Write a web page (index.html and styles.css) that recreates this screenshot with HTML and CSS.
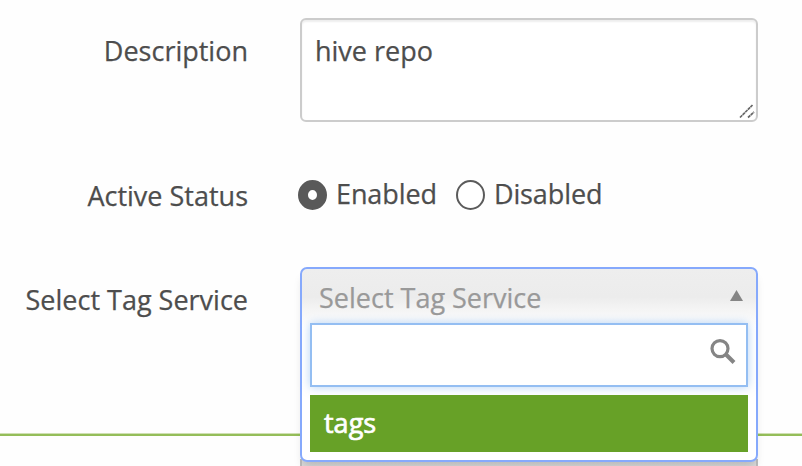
FILE: index.html
```html
<!DOCTYPE html>
<html lang="en">
<head>
<meta charset="utf-8">
<title>Service settings</title>
<link rel="stylesheet" href="styles.css">
</head>
<body>
<form class="form">
  <div class="row row-description">
    <div class="label">Description</div>
    <div class="textarea">
      hive repo
      <svg class="grip" width="16" height="16" viewBox="0 0 16 16"><path d="M1 14.5 13.5 2M9 14.5 15 9" stroke="#666" stroke-width="1.7" stroke-dasharray="3.2 .5" fill="none"/></svg>
    </div>
  </div>
  <div class="row row-status">
    <div class="label">Active Status</div>
    <div class="radios">
      <div class="radio"><i class="dot checked"></i><span>Enabled</span></div>
      <div class="radio"><i class="dot"></i><span>Disabled</span></div>
    </div>
  </div>
  <div class="row row-tag">
    <div class="label">Select Tag Service</div>
    <div class="select">
      <div class="choice"><span>Select Tag Service</span>
        <svg width="13" height="11" viewBox="0 0 13 11"><path d="M6.5 0 13 11H0Z" fill="#858585"/></svg>
      </div>
      <div class="search">
        <svg width="28" height="28" viewBox="0 0 28 28" fill="none" stroke="#858585"><circle cx="11" cy="10.6" r="8" stroke-width="3.2"/><path d="M16.5 16 25 24.5" stroke-width="4"/></svg>
      </div>
      <div class="option">tags</div>
    </div>
  </div>
</form>
<div class="divider"></div>
<div class="next-field"></div>
</body>
</html>
```

FILE: styles.css
```css
* { box-sizing: border-box; }
body {
  margin: 0;
  height: 466px;
  overflow: hidden;
  background: #fefefe;
  color: #4d4d4d;
  font: 27px/38px "Open Sans", "Noto Sans", sans-serif;
  -webkit-text-stroke: .25px;
}
.form { height: 433px; padding-top: 18px; }
.row {
  display: grid;
  grid-template-columns: 248px 458px;
  column-gap: 52px;
  align-items: start;
}
.row-description { height: 149px; }
.row-status { height: 100px; }
.label { text-align: right; white-space: nowrap; padding-top: 14px; }
.row-status .label { padding-top: 10px; }
.textarea {
  position: relative;
  height: 104px;
  border: 2px solid #ccc;
  border-radius: 6px;
  padding: 12px 13px;
  background: #fff;
  box-shadow: inset 0 2px 2px #eee;
}
.grip { position: absolute; right: 1px; bottom: 1px; }
.radios { display: flex; gap: 19px; padding-top: 8px; margin-left: -2px; }
.radio { display: flex; gap: 9px; letter-spacing: -.1px; }
.dot {
  width: 29px;
  height: 30px;
  margin-top: 5px;
  border: 2px solid #5b5b5b;
  border-radius: 50%;
  background: #fff;
}
.dot.checked { border-width: 10.5px 10px; border-color: #595959; }
.select {
  position: relative;
  z-index: 1;
  height: 195px;
  border: 2px solid #86a9fc;
  border-radius: 7px;
  padding: 0 8px 8px;
  background: linear-gradient(#eee 0, #ececec 28px, #f7f7f7 44px, #fff 58px);
  box-shadow: 0 8px 10px -3px rgba(0, 0, 0, .15);
}
.choice {
  display: flex;
  justify-content: space-between;
  height: 54px;
  padding: 10px 5px 0 9px;
  color: #999;
}
.choice svg { margin-top: 11px; }
.search {
  display: flex;
  justify-content: flex-end;
  height: 64px;
  padding: 13px 9px 0 0;
  border: 2px solid #94bef2;
  background: #fff;
  box-shadow: 0 0 9px rgba(110, 170, 240, .5);
}
.option {
  height: 57px;
  margin-top: 8px;
  padding: 9px 14px;
  background: #67a127;
  color: #fff;
  -webkit-text-stroke: .7px #fff;
}
.divider { height: 3px; border-top: 1px solid #cfe0b3; background: #94bd59; }
.next-field {
  width: 458px;
  height: 30px;
  margin-left: 300px;
  border: solid #bdbdbd;
  border-width: 0 2px;
  background: linear-gradient(#ccc, #dcdcdc);
  clip-path: inset(23px 0 0 0);
}
```
